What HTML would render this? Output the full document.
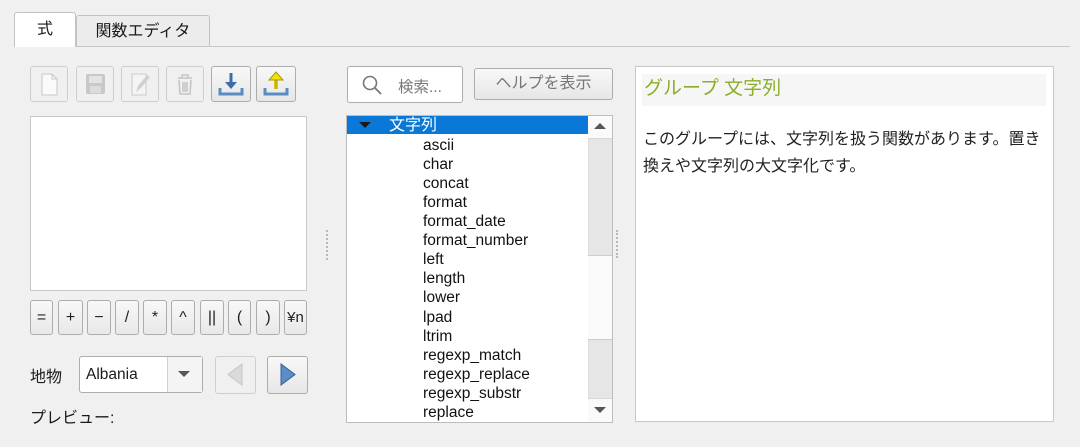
<!DOCTYPE html>
<html><head><meta charset="utf-8"><style>
*{box-sizing:border-box;margin:0;padding:0}
body{width:1080px;height:447px;background:#f0f0f0;position:relative;overflow:hidden;font-family:"Liberation Sans","Noto Sans CJK JP",sans-serif;color:#1a1a1a}
.a{position:absolute}
.btn{position:absolute;border:1px solid #adadad;border-radius:3px;background:linear-gradient(#f8f8f8,#e6e6e6)}
.dis{border-color:#cfcfcf;background:#f0f0f0}
.op{position:absolute;top:300px;height:35px;border:1px solid #adadad;border-radius:3px;background:linear-gradient(#f8f8f8,#e8e8e8);font-size:16px;text-align:center;line-height:33px;color:#222}
.row{position:absolute;left:423px;font-size:15.5px;line-height:19px;color:#111}
.dots{position:absolute;width:2px;border-left:2px dotted #b8b8b8}
</style></head><body>
<div class="a" style="left:14px;top:46px;width:1056px;height:1px;background:#c8c8c8"></div>
<div class="a" style="left:76px;top:15px;width:134px;height:31px;border:1px solid #c2c2c2;border-bottom:none;border-radius:3px 3px 0 0;background:#ececec;font-size:16px;text-align:center;line-height:31px">関数エディタ</div>
<div class="a" style="left:14px;top:12px;width:62px;height:36px;border:1px solid #c2c2c2;border-bottom:none;border-radius:3px 3px 0 0;background:#fff;font-size:16px;text-align:center;line-height:34px">式</div>
<div class="a" style="left:14px;top:47px;width:1056px;height:400px;background:#f0f0f0"></div>

<div class="btn dis" style="left:30px;top:66px;width:38px;height:36px"><svg width="36" height="34"><path d="M11 7h10l5 5v16H11z" fill="#fafafa" stroke="#c8c8c8"/><path d="M21 7v5h5" fill="none" stroke="#c8c8c8"/></svg></div>
<div class="btn dis" style="left:76px;top:66px;width:38px;height:36px"><svg width="36" height="34"><rect x="9" y="7" width="19" height="20" rx="2" fill="#c8c8c8"/><rect x="12" y="9" width="13" height="7" fill="#e4e4e4"/><rect x="13" y="19" width="11" height="7" fill="#dcdcdc"/></svg></div>
<div class="btn dis" style="left:121px;top:66px;width:38px;height:36px"><svg width="36" height="34"><path d="M10 7h14v21H10z" fill="#f4f4f4" stroke="#cacaca"/><path d="M14 25l2-6 9-11 3 2-9 11z" fill="#d0d0d0"/></svg></div>
<div class="btn dis" style="left:166px;top:66px;width:38px;height:36px"><svg width="36" height="34"><path d="M11 11h14M15 11V8h6v3M12 13l1 14h10l1-14M16 15v10M18 15v10M20 15v10" fill="none" stroke="#c4c4c4" stroke-width="1.5"/></svg></div>
<div class="btn" style="left:211px;top:66px;width:40px;height:36px"><svg width="38" height="34"><path d="M19 6v14" stroke="#3d6da8" stroke-width="3"/><path d="M13 15l6 7 6-7z" fill="#3d6da8"/><path d="M8 21v6h22v-6" fill="none" stroke="#5a8cc4" stroke-width="3"/></svg></div>
<div class="btn" style="left:256px;top:66px;width:40px;height:36px"><svg width="38" height="34"><path d="M19 22V11" stroke="#c8b400" stroke-width="3.5"/><path d="M12 13l7-8 7 8z" fill="#f2e400" stroke="#a89a00"/><path d="M8 21v6h22v-6" fill="none" stroke="#5a8cc4" stroke-width="3"/></svg></div>

<div class="a" style="left:30px;top:116px;width:277px;height:175px;background:#fff;border:1px solid #c8c8c8"></div>

<div class="op" style="left:30px;width:23px">=</div>
<div class="op" style="left:58px;width:25px">+</div>
<div class="op" style="left:87px;width:24px">−</div>
<div class="op" style="left:115px;width:24px">/</div>
<div class="op" style="left:143px;width:24px">*</div>
<div class="op" style="left:171px;width:24px">^</div>
<div class="op" style="left:200px;width:24px">||</div>
<div class="op" style="left:228px;width:23px">(</div>
<div class="op" style="left:256px;width:24px">)</div>
<div class="op" style="left:284px;width:23px;font-size:15px">¥n</div>

<div class="a" style="left:30px;top:363px;font-size:16px">地物</div>
<div class="a" style="left:79px;top:356px;width:124px;height:37px;border:1px solid #adadad;border-radius:3px;background:#fff"><span class="a" style="left:6px;top:9px;font-size:15.5px">Albania</span><div class="a" style="left:87px;top:0;width:35px;height:35px;border-left:1px solid #d0d0d0;background:#f4f4f4"></div><svg class="a" style="left:97px;top:13px" width="14" height="8"><path d="M1 1h12L7 7z" fill="#555"/></svg></div>
<div class="btn dis" style="left:215px;top:356px;width:41px;height:38px"><svg width="39" height="36"><path d="M26 7v21L12 17.5z" fill="#dadada" stroke="#c4c4c4"/></svg></div>
<div class="btn" style="left:267px;top:356px;width:41px;height:38px"><svg width="39" height="36"><path d="M13 7v21l14-10.5z" fill="#5b8cc8" stroke="#355f94"/></svg></div>
<div class="a" style="left:30px;top:404px;font-size:16px">プレビュー:</div>

<div class="dots" style="left:326px;top:230px;height:30px"></div>

<div class="a" style="left:347px;top:66px;width:116px;height:37px;border:1px solid #adadad;border-radius:3px;background:#fff"><svg class="a" style="left:13px;top:7px" width="22" height="22"><circle cx="9" cy="9" r="6.5" fill="none" stroke="#777" stroke-width="1.6"/><path d="M14 14l6 6" stroke="#777" stroke-width="1.8"/></svg><span class="a" style="left:50px;top:8px;font-size:15.5px;color:#777">検索...</span></div>
<div class="btn" style="left:474px;top:68px;width:139px;height:32px;font-size:16px;color:#777;text-align:center;line-height:30px">ヘルプを表示</div>

<div class="a" style="left:346px;top:115px;width:267px;height:308px;background:#fff;border:1px solid #bdbdbd"></div>
<div class="a" style="left:347px;top:116px;width:241px;height:18px;background:#0a78d7"></div>
<svg class="a" style="left:358px;top:121px" width="14" height="8"><path d="M1 1h12L7 7z" fill="#1a1a1a"/></svg>
<div class="a" style="left:389px;top:116px;font-size:16px;color:#fff;line-height:19px">文字列</div>
<div class="row" style="top:136px">ascii</div>
<div class="row" style="top:155px">char</div>
<div class="row" style="top:174px">concat</div>
<div class="row" style="top:193px">format</div>
<div class="row" style="top:212px">format_date</div>
<div class="row" style="top:231px">format_number</div>
<div class="row" style="top:250px">left</div>
<div class="row" style="top:269px">length</div>
<div class="row" style="top:288px">lower</div>
<div class="row" style="top:308px">lpad</div>
<div class="row" style="top:327px">ltrim</div>
<div class="row" style="top:346px">regexp_match</div>
<div class="row" style="top:365px">regexp_replace</div>
<div class="row" style="top:384px">regexp_substr</div>
<div class="row" style="top:403px">replace</div>
<div class="a" style="left:588px;top:116px;width:24px;height:306px;background:#e6e6e6;border-left:1px solid #ddd"></div>
<div class="a" style="left:588px;top:116px;width:24px;height:23px;background:#fafafa;border-bottom:1px solid #d8d8d8"></div>
<svg class="a" style="left:593px;top:122px" width="14" height="8"><path d="M1 7h12L7 1z" fill="#555"/></svg>
<div class="a" style="left:588px;top:255px;width:24px;height:85px;background:#fafafa;border-top:1px solid #ccc;border-bottom:1px solid #ccc"></div>
<div class="a" style="left:588px;top:398px;width:24px;height:24px;background:#fafafa;border-top:1px solid #d8d8d8"></div>
<svg class="a" style="left:593px;top:406px" width="14" height="8"><path d="M1 1h12L7 7z" fill="#555"/></svg>

<div class="dots" style="left:616px;top:230px;height:28px"></div>

<div class="a" style="left:635px;top:66px;width:419px;height:356px;background:#fff;border:1px solid #c8c8c8"></div>
<div class="a" style="left:642px;top:74px;width:404px;height:32px;background:#f6f6f6"></div>
<div class="a" style="left:644px;top:76px;font-size:19px;color:#8aae2c;line-height:26px">グループ 文字列</div>
<div class="a" style="left:643px;top:126px;width:400px;font-size:16px;line-height:27px;color:#222">このグループには、文字列を扱う関数があります。置き換えや文字列の大文字化です。</div>
</body></html>
